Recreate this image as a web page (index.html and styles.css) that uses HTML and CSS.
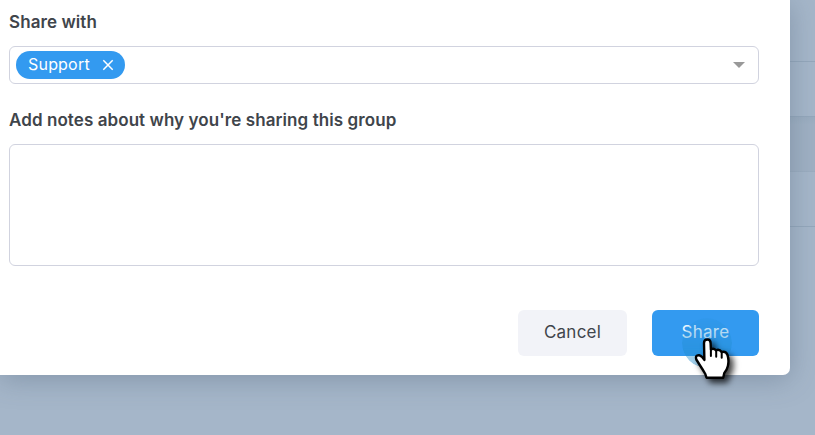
FILE: index.html
```html
<!DOCTYPE html>
<html lang="en">
<head>
<meta charset="utf-8">
<title>Share group</title>
<link rel="stylesheet" href="styles.css">
</head>
<body>
<div class="backdrop"><div class="row first"></div><div class="row"></div><div class="row shaded"></div><div class="row"></div></div>
<main class="modal">
  <label class="label">Share with</label>
  <div class="select">
    <span class="chip"><span class="chip-text">Support</span>
      <svg class="close" width="12" height="12" viewBox="0 0 12 12"><path d="M1.3 1.3l9.4 9.4M10.7 1.3l-9.4 9.4"/></svg>
    </span>
    <svg class="caret" width="12" height="6" viewBox="0 0 12 6"><path d="M0 0h12L6 6z"/></svg>
  </div>
  <label class="label notes-label">Add notes about why you're sharing this group</label>
  <div class="notes"></div>
  <div class="actions">
    <button class="btn cancel"><span>Cancel</span></button>
    <button class="btn share"><span>Share</span></button>
  </div>
</main>
<div class="halo"></div>
<svg class="cursor" width="50" height="56" viewBox="690 334 50 56">
  <path d="M704 343C704 338.300 710.600 338.300 710.600 343L710.900 349.500Q713.500 347.800 716 350.300Q719.400 348.800 721.700 352Q726 351 727.500 355Q729.200 360 727.900 366Q727 370 724.300 373L723.200 377.700H706.500L705.300 374Q703 370 700.700 366.500L696.300 359.500Q695 355 699 355.200Q702.300 356.200 704.400 360Z"/>
  <path class="finger" d="M710.900 349.500V356M716.200 350.300V356.700M721.700 352V357.700"/>
</svg>
</body>
</html>
```
FILE: styles.css
```css
* { box-sizing: border-box; }
body {
  margin: 0;
  width: 815px;
  height: 435px;
  overflow: hidden;
  position: relative;
  background: #a5b6c9;
  font-family: Inter, "Liberation Sans", sans-serif;
  color: #3f454b;
}
.backdrop { position: absolute; inset: 0; }
.row { height: 55px; border-bottom: 1px solid #94a7bb; }
.row.first { height: 62px; }
.row.shaded { border-bottom-color: transparent; background: linear-gradient(#9aacbf, #9fb0c3 8px); }
.modal {
  position: relative;
  width: 790px;
  height: 375px;
  padding: 10px 31px 19px 9px;
  background: #fff;
  border-radius: 0 0 7px 0;
  box-shadow: 0 4px 28px rgba(70, 90, 112, .35);
}
.label {
  display: block;
  height: 24px;
  line-height: 24px;
  font-size: 17px;
  font-weight: 600;
  letter-spacing: .08px;
  white-space: nowrap;
}
.select {
  display: flex;
  align-items: center;
  justify-content: space-between;
  height: 38px;
  margin-top: 12px;
  padding: 0 13px 0 6px;
  border: 1px solid #d1d3df;
  border-radius: 6px;
}
.chip {
  display: flex;
  align-items: center;
  justify-content: space-between;
  width: 109px;
  height: 28px;
  padding: 0 11px 0 12px;
  border-radius: 14px;
  background: #339af0;
  color: #fff;
  font-size: 16px;
  letter-spacing: .2px;
}
.chip-text { padding-bottom: 2px; }
.close { fill: none; stroke: #fff; stroke-width: 1.5; }
.caret { fill: #999; }
.notes-label { margin-top: 24px; }
.notes {
  height: 122px;
  margin-top: 12px;
  border: 1px solid #d1d3df;
  border-radius: 6px;
}
.actions { display: flex; justify-content: flex-end; gap: 25px; margin-top: 44px; }
.btn {
  height: 46px;
  padding: 0 0 2px;
  border: 0;
  border-radius: 6px;
  font: 400 17px Inter, "Liberation Sans", sans-serif;
  letter-spacing: .25px;
}
.cancel { width: 109px; background: #f2f3f8; color: #3f454b; }
.share { width: 107px; background: #339af0; color: #e6f4ff; }
.halo {
  position: absolute;
  left: 682px;
  top: 318px;
  width: 50px;
  height: 50px;
  border-radius: 50%;
  background: rgba(32, 140, 205, .42);
  mask-image: linear-gradient(rgba(0, 0, 0, .25), #000 65%);
}
.cursor {
  position: absolute;
  left: 690px;
  top: 334px;
  overflow: visible;
  filter: drop-shadow(4px 4px 3px rgba(0, 0, 0, .75));
  fill: #fff;
  stroke: #000;
  stroke-width: 2.4;
  stroke-linejoin: round;
  stroke-linecap: round;
}
.finger { fill: none; stroke-width: 2; }
```
